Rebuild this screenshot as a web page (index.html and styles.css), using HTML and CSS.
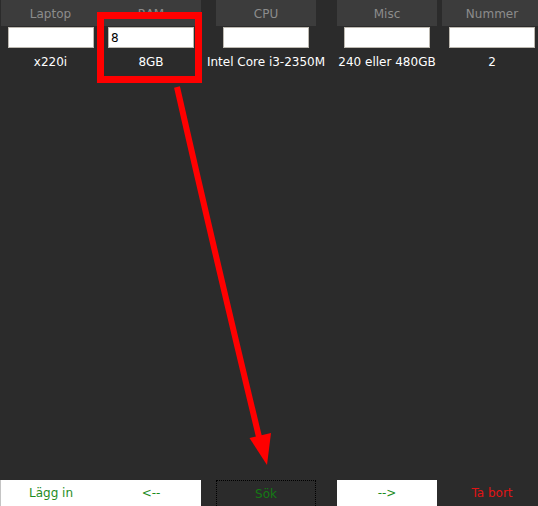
FILE: index.html
```html
<!DOCTYPE html>
<html>
<head>
<meta charset="utf-8">
<link rel="stylesheet" href="styles.css">
</head>
<body>
<div class="app">
  <div class="grid">
    <div class="cell"><div class="hdr">Laptop</div></div>
    <div class="cell"><div class="hdr">RAM</div></div>
    <div class="cell"><div class="hdr">CPU</div></div>
    <div class="cell"><div class="hdr">Misc</div></div>
    <div class="cell"><div class="hdr">Nummer</div></div>

    <div class="cell"><input class="entry" type="text" value=""></div>
    <div class="cell"><input class="entry" type="text" value="8"></div>
    <div class="cell"><input class="entry" type="text" value=""></div>
    <div class="cell"><input class="entry" type="text" value=""></div>
    <div class="cell"><input class="entry" type="text" value=""></div>

    <div class="cell val">x220i</div>
    <div class="cell val">8GB</div>
    <div class="cell val">Intel Core i3-2350M</div>
    <div class="cell val">240 eller 480GB</div>
    <div class="cell val">2</div>
  </div>

  <div class="grid bottom">
    <div class="cell end"><div class="btn white first">Lägg in</div></div>
    <div class="cell"><div class="btn white">&lt;--</div></div>
    <div class="cell"><div class="btn focus">Sök</div></div>
    <div class="cell"><div class="btn white">--&gt;</div></div>
    <div class="cell"><div class="btn red">Ta bort</div></div>
  </div>

  <svg class="overlay" width="538" height="506" viewBox="0 0 538 506">
    <rect x="100.5" y="15.5" width="98" height="64" fill="none" stroke="#ff0000" stroke-width="7"/>
    <path d="M177 87 Q 214 250 259 437" fill="none" stroke="#ff0000" stroke-width="6"/>
    <polygon points="249.5,438 271,433 267,465" fill="#ff0000"/>
  </svg>
</div>
</body>
</html>
```
FILE: styles.css
```css
html, body {
  margin: 0;
  padding: 0;
  overflow: hidden;
}
body {
  width: 538px;
  height: 506px;
  background: #2b2b2b;
  font-family: "DejaVu Sans", sans-serif;
  font-size: 12px;
}
.app {
  position: relative;
  width: 538px;
  height: 506px;
  display: flex;
  flex-direction: column;
}
.grid {
  display: grid;
  grid-template-columns: 101px 100px 130px 112px 98px;
  grid-template-rows: 26px 22px 22px;
  width: 541px;
}
.cell {
  display: flex;
  justify-content: center;
  align-items: flex-start;
  min-width: 0;
}
.cell.end {
  justify-content: flex-end;
}
.hdr {
  width: 100px;
  height: 26px;
  flex: none;
  background: #3c3c3c;
  color: #8c8c8c;
  display: flex;
  align-items: center;
  justify-content: center;
  line-height: 14px;
  padding-top: 1px;
  box-sizing: border-box;
}
.entry {
  margin-top: 1px;
  width: 86px;
  height: 21px;
  box-sizing: border-box;
  border: 1px solid #bdb9b1;
  background: #ffffff;
  font-family: "DejaVu Sans", sans-serif;
  font-size: 12px;
  color: #000;
  padding: 1px 2px 0;
  outline: none;
}
.val {
  color: #ffffff;
  white-space: nowrap;
  padding-top: 7px;
  line-height: 14px;
}
.bottom {
  margin-top: auto;
  grid-template-rows: 26px;
}
.btn {
  width: 100px;
  height: 26px;
  flex: none;
  box-sizing: border-box;
  display: flex;
  align-items: center;
  justify-content: center;
  color: #1e8c1e;
  line-height: 14px;
}
.btn.white {
  background: #ffffff;
}
.btn.first {
  width: 101px;
  border-left: 1px solid #c4c4c4;
}
.btn.focus {
  border: 1px dotted #000000;
  border-bottom: none;
  color: #147a14;
}
.btn.red {
  color: #e01414;
}
.overlay {
  position: absolute;
  left: 0;
  top: 0;
  pointer-events: none;
}
```
